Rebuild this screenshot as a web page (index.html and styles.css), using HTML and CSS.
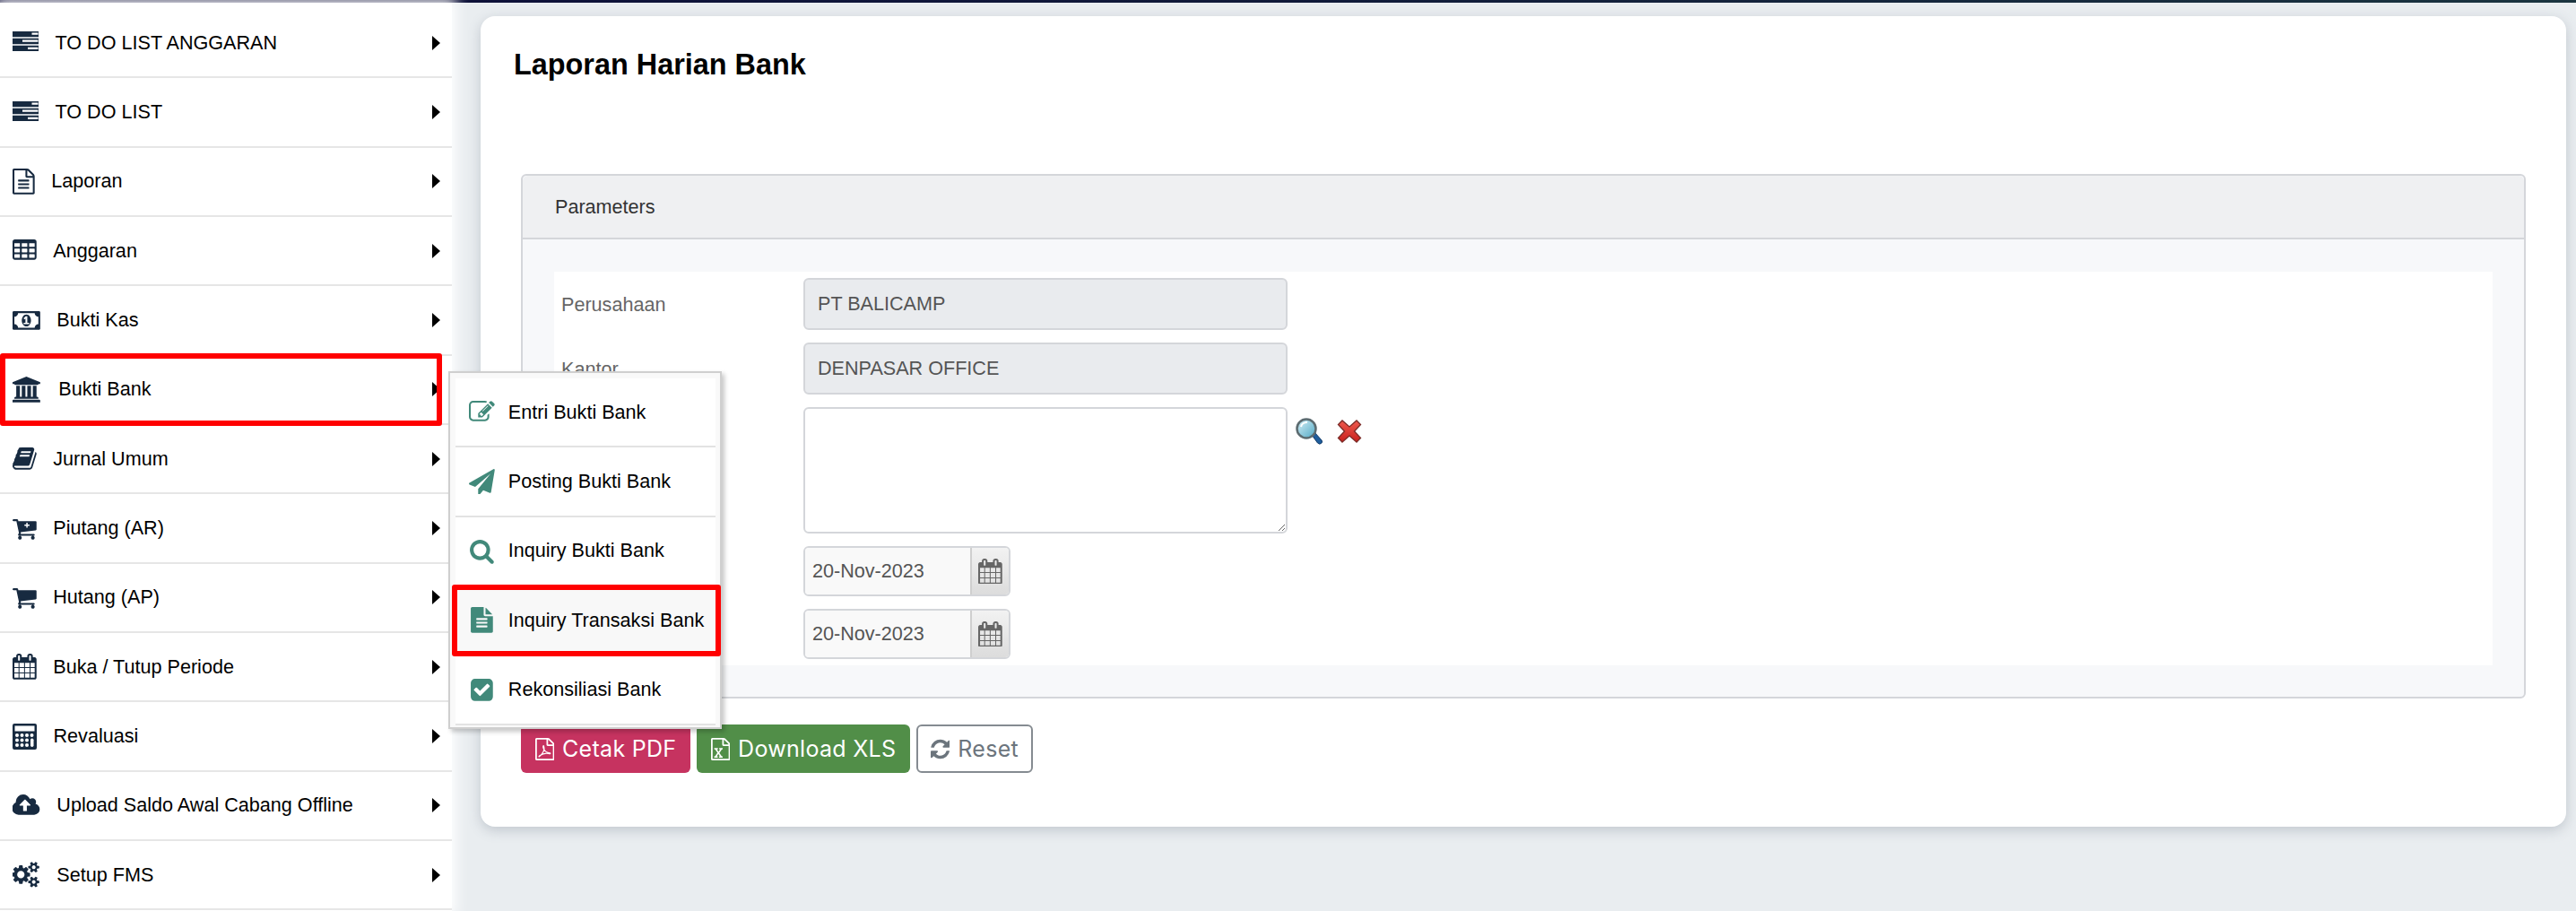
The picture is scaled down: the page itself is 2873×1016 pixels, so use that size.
FILE: index.html
```html
<!DOCTYPE html>
<html lang="id">
<head>
<meta charset="utf-8">
<title>Laporan Harian Bank</title>
<link rel="stylesheet" href="styles.css">
</head>
<body>
<svg class="defs" width="0" height="0" aria-hidden="true">
<defs>
<path id="file-o" fill-rule="evenodd" d="M1596 380q28 28 48 76t20 88v1152q0 40-28 68t-68 28h-1344q-40 0-68-28t-28-68v-1600q0-40 28-68t68-28h896q40 0 88 20t76 48zm-444-244v376h376q-10-29-22-41l-313-313q-12-12-41-22zm384 1528v-1024h-416q-40 0-68-28t-28-68v-416h-768v1536h1280z"/>
<path id="file-lines" d="M512 800q0-14 9-23t23-9h704q14 0 23 9t9 23v64q0 14-9 23t-23 9h-704q-14 0-23-9t-9-23v-64zm736 224q14 0 23 9t9 23v64q0 14-9 23t-23 9h-704q-14 0-23-9t-9-23v-64q0-14 9-23t23-9h704zm0 256q14 0 23 9t9 23v64q0 14-9 23t-23 9h-704q-14 0-23-9t-9-23v-64q0-14 9-23t23-9h704z"/>
<path id="table" d="M576 1376v-192q0-14-9-23t-23-9h-320q-14 0-23 9t-9 23v192q0 14 9 23t23 9h320q14 0 23-9t9-23zm0-384v-192q0-14-9-23t-23-9h-320q-14 0-23 9t-9 23v192q0 14 9 23t23 9h320q14 0 23-9t9-23zm512 384v-192q0-14-9-23t-23-9h-320q-14 0-23 9t-9 23v192q0 14 9 23t23 9h320q14 0 23-9t9-23zm-512-768v-192q0-14-9-23t-23-9h-320q-14 0-23 9t-9 23v192q0 14 9 23t23 9h320q14 0 23-9t9-23zm512 384v-192q0-14-9-23t-23-9h-320q-14 0-23 9t-9 23v192q0 14 9 23t23 9h320q14 0 23-9t9-23zm512 384v-192q0-14-9-23t-23-9h-320q-14 0-23 9t-9 23v192q0 14 9 23t23 9h320q14 0 23-9t9-23zm-512-768v-192q0-14-9-23t-23-9h-320q-14 0-23 9t-9 23v192q0 14 9 23t23 9h320q14 0 23-9t9-23zm512 384v-192q0-14-9-23t-23-9h-320q-14 0-23 9t-9 23v192q0 14 9 23t23 9h320q14 0 23-9t9-23zm0-384v-192q0-14-9-23t-23-9h-320q-14 0-23 9t-9 23v192q0 14 9 23t23 9h320q14 0 23-9t9-23zm128-320v1088q0 66-47 113t-113 47h-1344q-66 0-113-47t-47-113v-1088q0-66 47-113t113-47h1344q66 0 113 47t47 113z"/>
<path id="money" d="M768 1152h384v-96h-128v-448h-114l-148 137 77 80q42-37 55-57h2v288h-128v96zm512-256q0 70-21 142t-59.5 134-101.5 101-138 39-138-39-101.5-101-59.5-134-21-142 21-142 59.5-134 101.5-101 138-39 138 39 101.5 101 59.5 134 21 142zm512 256v-512q-106 0-181-75t-75-181h-1152q0 106-75 181t-181 75v512q106 0 181 75t75 181h1152q0-106 75-181t181-75zm128-832v1152q0 26-19 45t-45 19h-1792q-26 0-45-19t-19-45v-1152q0-26 19-45t45-19h1792q26 0 45 19t19 45z"/>
<path id="bank" d="M960 0l960 384v128h-128q0 26-20.5 45t-48.5 19h-1526q-28 0-48.5-19t-20.5-45h-128v-128zm-704 640h256v768h128v-768h256v768h128v-768h256v768h128v-768h256v768h59q28 0 48.5 19t20.5 45v64h-1664v-64q0-26 20.5-45t48.5-19h59v-768zm1595 960q28 0 48.5 19t20.5 45v128h-1920v-128q0-26 20.5-45t48.5-19h1782z"/>
<path id="book" d="M1703 478q40 57 18 129l-275 906q-19 64-76.5 107.5t-122.5 43.5h-923q-77 0-148.5-53.5t-99.5-131.5q-24-67-2-127 0-4 3-27t4-37q1-8-3-21.5t-3-19.5q2-11 8-21t16.5-23.5 16.5-23.5q23-38 45-91.5t30-91.5q3-10 .5-30t-.5-28q3-11 17-28t17-23q21-36 42-92t25-90q1-9-2.5-32t.5-28q4-13 22-30.5t22-22.5q19-26 42.5-84.5t27.5-96.5q1-8-3-25.5t-2-26.5q2-8 9-18t18-23 17-21q8-12 16.5-30.5t15-35 16-36 19.5-32 26.5-23.5 36-11.5 47.5 5.5l-1 3q38-9 51-9h761q74 0 114 56t18 130l-274 906q-36 119-71.5 153.5t-128.5 34.5h-869q-27 0-38 15-11 16-1 43 24 70 144 70h923q29 0 56-15.5t35-41.5l300-987q7-22 5-57 38 15 59 43zm-1064 2q-4 13 2 22.5t20 9.5h608q13 0 25.5-9.5t16.5-22.5l21-64q4-13-2-22.5t-20-9.5h-608q-13 0-25.5 9.5t-16.5 22.5zm-83 256q-4 13 2 22.5t20 9.5h608q13 0 25.5-9.5t16.5-22.5l21-64q4-13-2-22.5t-20-9.5h-608q-13 0-25.5 9.5t-16.5 22.5z"/>
<path id="cart" d="M704 1536q0 52-38 90t-90 38-90-38-38-90 38-90 90-38 90 38 38 90zm896 0q0 52-38 90t-90 38-90-38-38-90 38-90 90-38 90 38 38 90zm128-1088v512q0 24-16.5 42.5t-40.5 21.5l-1044 122q13 60 13 70 0 16-24 64h920q26 0 45 19t19 45-19 45-45 19h-1024q-26 0-45-19t-19-45q0-11 8-31.5t16-36 21.5-40 15.5-29.5l-177-823h-204q-26 0-45-19t-19-45 19-45 45-19h256q16 0 28.5 6.5t19.5 15.5 13 24.5 8 26 5.5 29.5 4.5 26h1201q26 0 45 19t19 45z"/>
<path id="calendar" d="M192 1664h288v-288h-288v288zm352 0h320v-288h-320v288zm-352-352h288v-320h-288v320zm352 0h320v-320h-320v320zm-352-384h288v-288h-288v288zm736 736h320v-288h-320v288zm-384-736h320v-288h-320v288zm768 736h288v-288h-288v288zm-384-352h320v-320h-320v320zm-352-864v-288q0-13-9.5-22.5t-22.5-9.5h-64q-13 0-22.5 9.5t-9.5 22.5v288q0 13 9.5 22.5t22.5 9.5h64q13 0 22.5-9.5t9.5-22.5zm736 864h288v-320h-288v320zm-384-384h320v-288h-320v288zm384 0h288v-288h-288v288zm32-480v-288q0-13-9.5-22.5t-22.5-9.5h-64q-13 0-22.5 9.5t-9.5 22.5v288q0 13 9.5 22.5t22.5 9.5h64q13 0 22.5-9.5t9.5-22.5zm384-64v1280q0 52-38 90t-90 38h-1408q-52 0-90-38t-38-90v-1280q0-52 38-90t90-38h128v-96q0-66 47-113t113-47h64q66 0 113 47t47 113v96h384v-96q0-66 47-113t113-47h64q66 0 113 47t47 113v96h128q52 0 90 38t38 90z"/>
<path id="cloud" d="M1216 864q0-14-9-23l-352-352q-9-9-23-9t-23 9l-351 351q-10 12-10 24 0 14 9 23t23 9h224v352q0 13 9.5 22.5t22.5 9.5h192q13 0 22.5-9.5t9.5-22.5v-352h224q13 0 22.5-9.5t9.5-22.5zm640 288q0 159-112.5 271.5t-271.5 112.5h-1088q-185 0-316.5-131.5t-131.5-316.5q0-130 70-240t188-165q-2-30-2-43 0-212 150-362t362-150q156 0 285.5 87t188.5 231q71-62 166-62 106 0 181 75t75 181q0 76-41 138 130 31 213.5 135.5t83.5 238.5z"/>
<path id="cogs" d="M832 896q0-106-75-181t-181-75-181 75-75 181 75 181 181 75 181-75 75-181zm768 512q0-52-38-90t-90-38-90 38-38 90q0 53 37.5 90.5t90.5 37.5 90.5-37.5 37.5-90.5zm0-1024q0-52-38-90t-90-38-90 38-38 90q0 53 37.5 90.5t90.5 37.5 90.5-37.5 37.5-90.5zm-384 421v185q0 10-7 19.5t-16 10.5l-155 24q-11 35-32 76 34 48 90 115 7 11 7 20 0 12-7 19-23 30-82.5 89.5t-78.5 59.5q-11 0-21-7l-115-90q-37 19-77 31-11 108-23 155-7 24-30 24h-186q-11 0-20-7.5t-10-17.5l-23-153q-34-10-75-31l-118 89q-7 7-20 7-11 0-21-8-144-133-144-160 0-9 7-19 10-14 41-53t47-61q-23-44-35-82l-152-24q-10-1-17-9.5t-7-19.5v-185q0-10 7-19.5t16-10.5l155-24q11-35 32-76-34-48-90-115-7-11-7-20 0-12 7-20 22-30 82-89t79-59q11 0 21 7l115 90q34-18 77-32 11-108 23-154 7-24 30-24h186q11 0 20 7.5t10 17.5l23 153q34 10 75 31l118-89q8-7 20-7 11 0 21 8 144 133 144 160 0 8-7 19-12 16-42 54t-45 60q23 48 34 82l152 23q10 2 17 10.5t7 19.5zm640 533v140q0 16-149 31-12 27-30 52 51 113 51 138 0 4-4 7-122 71-124 71-8 0-46-47t-52-68q-20 2-30 2t-30-2q-14 21-52 68t-46 47q-2 0-124-71-4-3-4-7 0-25 51-138-18-25-30-52-149-15-149-31v-140q0-16 149-31 13-29 30-52-51-113-51-138 0-4 4-7 4-2 35-20t59-34 30-16q8 0 46 46.5t52 67.5q20-2 30-2t30 2q51-71 92-112l6-2q4 0 124 70 4 3 4 7 0 25-51 138 17 23 30 52 149 15 149 31zm0-1024v140q0 16-149 31-12 27-30 52 51 113 51 138 0 4-4 7-122 71-124 71-8 0-46-47t-52-68q-20 2-30 2t-30-2q-14 21-52 68t-46 47q-2 0-124-71-4-3-4-7 0-25 51-138-18-25-30-52-149-15-149-31v-140q0-16 149-31 13-29 30-52-51-113-51-138 0-4 4-7 4-2 35-20t59-34 30-16q8 0 46 46.5t52 67.5q20-2 30-2t30 2q51-71 92-112l6-2q4 0 124 70 4 3 4 7 0 25-51 138 17 23 30 52 149 15 149 31z"/>
<path id="server" fill-rule="evenodd" d="M0 1h29v6.3H0zM21.5 2.6v2.2h7V2.6zM0 8.7h29v6.6H0zM11 10.6v2.2h17.5v-2.2zM0 16.7h29v6.3H0zM17 18.7v2.2h11.5v-2.2z"/>
<path id="calc" fill-rule="evenodd" d="M2 0h23a2 2 0 0 1 2 2v25a2 2 0 0 1-2 2H2a2 2 0 0 1-2-2V2a2 2 0 0 1 2-2zM2.5 2.5v6h22v-6z"/>
<path id="edit" d="M888 1184l116-116-152-152-116 116v56h96v96h56zm440-720q-16-16-33 1l-350 350q-17 17-1 33t33-1l350-350q17-17 1-33zm80 594v190q0 119-84.5 203.5t-203.5 84.5h-832q-119 0-203.5-84.5t-84.5-203.5v-832q0-119 84.5-203.5t203.5-84.5h832q63 0 117 25 15 7 18 23 3 17-9 29l-49 49q-14 14-32 8-23-6-45-6h-832q-66 0-113 47t-47 113v832q0 66 47 113t113 47h832q66 0 113-47t47-113v-126q0-13 9-22l64-64q15-15 35-7t20 29zm-96-738l288 288-672 672h-288v-288zm444 132l-92 92-288-288 92-92q28-28 68-28t68 28l152 152q28 28 28 68t-28 68z"/>
<path id="send" d="M1764 11q33 24 27 64l-256 1536q-5 29-32 45-14 8-31 8-11 0-24-5l-453-185-242 295q-18 23-49 23-13 0-22-4-19-7-30.5-23.5t-11.5-36.5v-349l864-1059-1069 925-395-162q-37-14-40-55-2-40 32-59l1664-960q15-9 32-9 20 0 36 11z"/>
<path id="search" d="M1216 832q0-185-131.5-316.5t-316.5-131.5-316.5 131.5-131.5 316.5 131.5 316.5 316.5 131.5 316.5-131.5 131.5-316.5zm512 832q0 52-38 90t-90 38q-54 0-90-38l-343-342q-179 124-399 124-143 0-273.5-55.5t-225-150-150-225-55.5-273.5 55.5-273.5 150-225 225-150 273.5-55.5 273.5 55.5 225 150 150 225 55.5 273.5q0 220-124 399l343 343q37 37 37 90z"/>
<path id="file-text" d="M1596 476q14 14 28 36h-472v-472q22 14 36 28zm-476 164h544v1056q0 40-28 68t-68 28h-1344q-40 0-68-28t-28-68v-1600q0-40 28-68t68-28h800v544q0 40 28 68t68 28zm160 736v-64q0-14-9-23t-23-9h-704q-14 0-23 9t-9 23v64q0 14 9 23t23 9h704q14 0 23-9t9-23zm0-256v-64q0-14-9-23t-23-9h-704q-14 0-23 9t-9 23v64q0 14 9 23t23 9h704q14 0 23-9t9-23zm0-256v-64q0-14-9-23t-23-9h-704q-14 0-23 9t-9 23v64q0 14 9 23t23 9h704q14 0 23-9t9-23z"/>
<path id="check" d="M813 1299l614-614q19-19 19-45t-19-45l-102-102q-19-19-45-19t-45 19l-467 467-211-211q-19-19-45-19t-45 19l-102 102q-19 19-19 45t19 45l358 358q19 19 45 19t45-19zm851-883v960q0 119-84.5 203.5t-203.5 84.5h-960q-119 0-203.5-84.5t-84.5-203.5v-960q0-119 84.5-203.5t203.5-84.5h960q119 0 203.5 84.5t84.5 203.5z"/>
<path id="refresh" d="M1639 1056q0 5-1 7-64 268-268 434.5t-478 166.5q-146 0-282.5-55t-243.5-157l-129 129q-19 19-45 19t-45-19-19-45v-448q0-26 19-45t45-19h448q26 0 45 19t19 45-19 45l-137 137q71 66 161 102t187 36q134 0 250-65t186-179q11-17 53-117 8-23 30-23h192q13 0 22.5 9.5t9.5 22.5zm25-800v448q0 26-19 45t-45 19h-448q-26 0-45-19t-19-45 19-45l138-138q-148-137-349-137-134 0-250 65t-186 179q-11 17-53 117-8 23-30 23h-199q-13 0-22.5-9.5t-9.5-22.5v-7q65-268 270-434.5t480-166.5q146 0 284 55.5t245 156.5l130-129q19-19 45-19t45 19 19 45z"/>
<path id="excel-x" d="M382 1466v106h281v-106h-75l103-161q5-7 10-16.5t7.5-13.5 3.5-4h2q1 4 5 10 2 4 4.5 7.5t6 8 6.5 8.5l107 161h-76v106h291v-106h-68l-192-273 195-282h67v-107h-279v107h74l-103 159q-4 7-10 16.5t-9 13.5l-2 3h-2q-1-4-5-10-6-11-17-23l-106-159h76v-107h-290v107h68l189 272-194 283h-68z"/>
<linearGradient id="glass" x1="0" y1="0" x2="1" y2="1"><stop offset="0" stop-color="#d8f1f8"/><stop offset="1" stop-color="#4fa8c4"/></linearGradient>
<linearGradient id="redx" x1="0" y1="0" x2="0" y2="1"><stop offset="0" stop-color="#ee5a4e"/><stop offset="1" stop-color="#c8201c"/></linearGradient>
</defs>
</svg>

<div class="topbar"></div>
<div class="shell">
  <nav class="sidebar">
    <a class="item"><svg class="ic ic-server" viewBox="0 0 29 24"><use href="#server"/></svg><span class="label">TO DO LIST ANGGARAN</span><i class="caret"></i></a>
    <a class="item"><svg class="ic ic-server" viewBox="0 0 29 24"><use href="#server"/></svg><span class="label">TO DO LIST</span><i class="caret"></i></a>
    <a class="item"><svg class="ic" viewBox="128 0 1536 1792"><use href="#file-o"/><use href="#file-lines"/></svg><span class="label">Laporan</span><i class="caret"></i></a>
    <a class="item"><svg class="ic" viewBox="64 0 1664 1792"><use href="#table"/></svg><span class="label">Anggaran</span><i class="caret"></i></a>
    <a class="item"><svg class="ic" viewBox="0 0 1920 1792"><use href="#money"/></svg><span class="label">Bukti Kas</span><i class="caret"></i></a>
    <a class="item item-marked item-bank"><svg class="ic" viewBox="0 0 1920 1792"><use href="#bank"/></svg><span class="label">Bukti Bank</span><i class="caret"></i></a>
    <a class="item"><svg class="ic" viewBox="64 0 1664 1792"><use href="#book"/></svg><span class="label">Jurnal Umum</span><i class="caret"></i></a>
    <a class="item"><svg class="ic" viewBox="64 0 1664 1792"><use href="#cart"/><path class="plus" d="M1020 490h90v130h130v90h-130v130h-90v-130h-130v-90h130z"/></svg><span class="label">Piutang (AR)</span><i class="caret"></i></a>
    <a class="item"><svg class="ic" viewBox="64 0 1664 1792"><use href="#cart"/></svg><span class="label">Hutang (AP)</span><i class="caret"></i></a>
    <a class="item"><svg class="ic" viewBox="64 0 1664 1792"><use href="#calendar"/></svg><span class="label">Buka / Tutup Periode</span><i class="caret"></i></a>
    <a class="item"><svg class="ic ic-calc" viewBox="0 0 27 29"><use href="#calc"/><g class="keys"><rect x="3" y="11" width="4" height="4" rx="2"/><rect x="8.5" y="11" width="4" height="4" rx="2"/><rect x="14" y="11" width="4" height="4" rx="2"/><rect x="19.5" y="11" width="4" height="4" rx="2"/><rect x="3" y="16.5" width="4" height="4" rx="2"/><rect x="8.5" y="16.5" width="4" height="4" rx="2"/><rect x="14" y="16.5" width="4" height="4" rx="2"/><rect x="20" y="16.5" width="3.5" height="9.5" rx="1.7"/><rect x="3" y="22" width="4" height="4" rx="2"/><rect x="8.5" y="22" width="4" height="4" rx="2"/><rect x="14" y="22" width="4" height="4" rx="2"/></g></svg><span class="label">Revaluasi</span><i class="caret"></i></a>
    <a class="item"><svg class="ic" viewBox="0 0 1920 1792"><use href="#cloud" x="32"/></svg><span class="label">Upload Saldo Awal Cabang Offline</span><i class="caret"></i></a>
    <a class="item"><svg class="ic" viewBox="0 0 1920 1792"><use href="#cogs"/></svg><span class="label">Setup FMS</span><i class="caret"></i></a>
  </nav>

  <main class="main">
    <section class="card">
      <h1 class="title">Laporan Harian Bank</h1>
      <div class="panel">
        <div class="panel-head">Parameters</div>
        <div class="panel-body">
          <div class="form">
            <div class="row"><div class="field-label">Perusahaan</div><div class="input input-off">PT BALICAMP</div></div>
            <div class="row"><div class="field-label">Kantor</div><div class="input input-off">DENPASAR OFFICE</div></div>
            <div class="row row-top">
              <div class="field-label"></div>
              <textarea class="area" readonly></textarea>
              <div class="tools">
                <svg class="tool" viewBox="0 0 30 30"><path d="M18 19l3-3 8 9q1.500 2-.5 3.500t-4-.5z" fill="#1f5d9c" stroke="#123a66"/><circle cx="12" cy="12" r="10.500" fill="url(#glass)" stroke="#5c6b70" stroke-width="2.500"/><path d="M6 10a7 6 0 0 1 7-5" fill="none" stroke="#fff" stroke-width="2"/></svg>
                <svg class="tool tool-x" viewBox="0 0 28 26"><path d="M1.500 5.500L6 1l8 7 8-7 4.500 4.500L19.500 13l7 7.500-4.500 4.500-8-7-8 7-4.500-4.500 7-7.500z" fill="url(#redx)" stroke="#7a2a26" stroke-width="1.300"/></svg>
              </div>
            </div>
            <div class="row"><div class="field-label"></div><div class="date"><div class="date-text">20-Nov-2023</div><div class="date-btn"><svg class="date-ic" viewBox="64 0 1664 1792"><use href="#calendar"/></svg></div></div></div>
            <div class="row"><div class="field-label"></div><div class="date"><div class="date-text">20-Nov-2023</div><div class="date-btn"><svg class="date-ic" viewBox="64 0 1664 1792"><use href="#calendar"/></svg></div></div></div>
          </div>
        </div>
      </div>
      <div class="actions">
        <button class="btn btn-pdf"><svg class="btn-ic" viewBox="128 0 1536 1792"><use href="#file-o"/><path class="swirl" d="M430 1500C720 1300 930 900 810 640C750 570 720 720 790 860C880 1060 1040 1180 1300 1200C1380 1240 1320 1300 1200 1260C1000 1190 720 1260 470 1420C410 1470 400 1510 430 1500Z"/></svg>Cetak PDF</button>
        <button class="btn btn-xls"><svg class="btn-ic" viewBox="128 0 1536 1792"><use href="#file-o"/><use href="#excel-x"/></svg>Download XLS</button>
        <button class="btn btn-reset"><svg class="btn-ic" viewBox="128 0 1536 1792"><use href="#refresh"/></svg>Reset</button>
      </div>
    </section>
  </main>

  <div class="popup">
    <a class="pop-item"><svg class="pop-ic" viewBox="0 0 1792 1792"><use href="#edit"/></svg><span>Entri Bukti Bank</span></a>
    <a class="pop-item"><svg class="pop-ic" viewBox="0 0 1792 1792"><use href="#send"/></svg><span>Posting Bukti Bank</span></a>
    <a class="pop-item"><svg class="pop-ic" viewBox="0 0 1792 1792"><use href="#search"/></svg><span>Inquiry Bukti Bank</span></a>
    <a class="pop-item pop-marked"><svg class="pop-ic" viewBox="0 0 1792 1792"><use href="#file-text"/></svg><span>Inquiry Transaksi Bank</span></a>
    <a class="pop-item"><svg class="pop-ic" viewBox="0 0 1792 1792"><use href="#check"/></svg><span>Rekonsiliasi Bank</span></a>
  </div>
</div>
</body>
</html>
```

FILE: styles.css
```css
*, *::before, *::after { box-sizing: border-box; }
html, body { margin: 0; height: 1016px; overflow: hidden; }
body {
  background: #e9edf0;
  font-family: "Liberation Sans", Arial, sans-serif;
  font-size: 21.6px;
  color: #000;
}
.defs { position: absolute; }

.topbar {
  height: 3px;
  background: linear-gradient(90deg, #0c0c38 0%, #101a3a 50%, #1b3540 100%);
}
.shell { position: relative; display: flex; height: 1013px; }

/* Sidebar */
.sidebar {
  flex: 0 0 504px;
  padding-top: 7px;
  background: #fff;
  box-shadow: 0 0 14px 5px rgba(255, 255, 255, .95);
  position: relative;
  z-index: 1;
}
.item {
  position: relative;
  display: flex;
  align-items: center;
  height: 77.35px;
  padding: 0 13px 0 14px;
  border-bottom: 2px solid #e6e6e6;
}
.ic { height: 28.8px; margin-right: 18.5px; fill: #172a40; flex: none; }
.ic-server { height: 24px; margin-top: -3px; }
.ic-calc { height: 29px; }
.item-bank .ic { margin-right: 20.5px; }
.plus { fill: #fff; }
.keys { fill: #fff; }
.label { flex: 1; white-space: nowrap; }
.caret {
  width: 0; height: 0;
  border-left: 9px solid #000;
  border-top: 8px solid transparent;
  border-bottom: 8px solid transparent;
}
.item-marked::after {
  content: "";
  position: absolute;
  left: 0; top: -3px; width: 493px; height: 81px;
  border: 6px solid #ff0000;
  border-radius: 3px;
}

/* Main card */
.main { flex: 1; padding: 15px 11px 0 32px; }
.card {
  height: 904px;
  padding: 0 45px;
  background: #fff;
  border-radius: 16px;
  box-shadow: 0 4px 14px rgba(90, 100, 120, .28);
}
.title {
  margin: 0 0 0 -8px;
  padding-top: 36px;
  height: 176px;
  font-size: 32.4px;
  line-height: 37px;
  font-weight: 700;
}
.panel {
  border: 2px solid #d4d6da;
  border-radius: 6px;
  background: #f7f8fa;
}
.panel-head {
  height: 71px;
  padding: 0 36px;
  line-height: 70px;
  color: #333;
  background: #eff0f2;
  border-bottom: 2px solid #d4d6da;
  border-radius: 6px 6px 0 0;
}
.panel-body { padding: 36px 35px 35px; }
.form {
  display: flex;
  flex-direction: column;
  gap: 14px;
  height: 439px;
  padding: 7px 8px;
  background: #fff;
}
.row { display: flex; align-items: center; }
.row-top { align-items: flex-start; }
.field-label { flex: 0 0 270px; padding-top: 2px; color: #666; }
.input {
  width: 540px;
  height: 58px;
  padding: 0 14px;
  line-height: 54px;
  color: #555;
  border: 2px solid #d4d6da;
  border-radius: 6px;
}
.input-off { background: #e9ebee; }
.area {
  display: block;
  width: 540px;
  height: 141px;
  margin: 0;
  background: #fff;
  border: 2px solid #d4d6da;
  border-radius: 6px;
  outline: none;
}
.tools { display: flex; gap: 16px; align-items: center; margin: 12px 0 0 9px; }
.tool { width: 30px; height: 30px; }
.tool-x { width: 28px; height: 26px; }

.date {
  display: flex;
  width: 231px;
  height: 56px;
  border: 2px solid #d4d6da;
  border-radius: 6px;
  overflow: hidden;
}
.date-text {
  flex: 1;
  padding-left: 8px;
  font-size: 21.6px;
  line-height: 52px;
  color: #555;
  background: #f9f9f9;
}
.date-btn {
  flex: 0 0 43px;
  display: flex;
  align-items: center;
  justify-content: center;
  border-left: 2px solid #cfcfcf;
  background: linear-gradient(#f2f2f2, #dcdcdc);
}
.date-ic { height: 28.8px; fill: #666; }

/* Buttons */
.actions { display: flex; gap: 7px; margin-top: 29px; }
.btn {
  display: flex;
  align-items: center;
  justify-content: center;
  gap: 9px;
  height: 54px;
  padding: 0;
  border: 0;
  border-radius: 6px;
  font-family: Inter, "Liberation Sans", sans-serif;
  font-size: 25px;
  letter-spacing: .3px;
  color: #fff;
}
.btn-ic { height: 25px; fill: currentColor; }
.swirl { fill: none; stroke: currentColor; stroke-width: 80; }
.btn-pdf { width: 189px; background: #c63360; }
.btn-xls { width: 238px; background: #518e48; }
.btn-reset { width: 130px; background: #fff; color: #6c757d; border: 2px solid #858b91; }

/* Popup menu */
.popup {
  position: absolute;
  left: 500px;
  top: 411px;
  z-index: 3;
  width: 305px;
  height: 399px;
  padding: 6px 5px 4px 6px;
  background: #f9f9f9;
  border: 2px solid #cfcfcf;
  box-shadow: 3px 3px 5px rgba(0, 0, 0, .22);
}
.pop-item {
  position: relative;
  display: flex;
  align-items: center;
  gap: 15px;
  height: 77.4px;
  padding: 0 0 0 15px;
  background: #fff;
  border-bottom: 2px solid #e3e3e3;
}
.pop-ic { width: 28.8px; height: 28.8px; fill: #41897a; flex: none; }
.pop-marked { background: #f8f8f8; }
.pop-marked::after {
  content: "";
  position: absolute;
  left: -4px; top: -2px; width: 300px; height: 80px;
  border: 6px solid #ff0000;
  border-radius: 3px;
}
```
